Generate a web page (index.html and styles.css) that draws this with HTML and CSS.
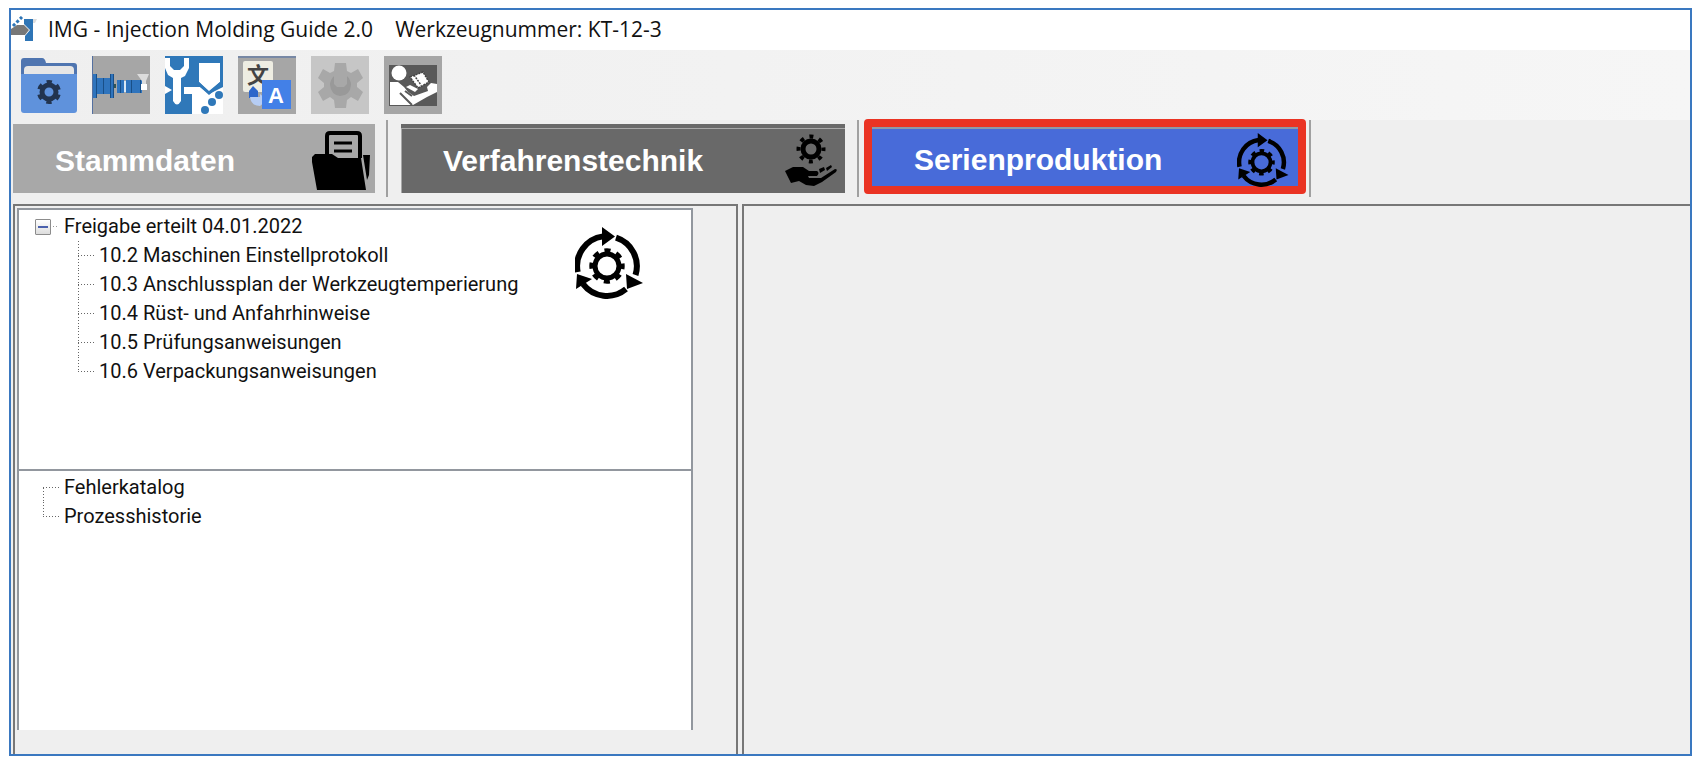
FILE: index.html
```html
<!DOCTYPE html>
<html lang="de">
<head>
  <meta charset="UTF-8">
  <meta name="viewport" content="width=device-width, initial-scale=1.0">
  <title>IMG - Injection Molding Guide 2.0</title>
  <link rel="stylesheet" href="styles.css">
</head>
<body>
  <!-- shared icon: gear inside three cycle arrows -->
  <svg class="defs" width="0" height="0" aria-hidden="true">
    <symbol id="cycle" viewBox="0 0 68 72">
      <g fill="none" stroke="#000" stroke-width="6">
        <path d="M2.7 45A30 30 0 0 1 28 9.4"/>
        <path d="M41 10.6A30 30 0 0 1 60.5 48"/>
        <path d="M51 62A30 30 0 0 1 8 57"/>
        <circle cx="32" cy="39" r="12" stroke-width="5"/>
        <circle cx="32" cy="39" r="15.200" stroke-width="5" stroke-dasharray="6 5.94" stroke-dashoffset="3"/>
      </g>
      <path d="M27 0L40 9.5 27 19zM51 47L68 56 52 62zM2 47L17 52 1 62z"/>
    </symbol>
  </svg>

  <div class="window">
    <header class="titlebar">
      <svg class="app-icon" width="26" height="26" viewBox="0 0 26 26">
        <path fill="#2e75b6" d="M13 3h9v22h-8v-5l5-6-6-6z"/>
        <path fill="#777" d="M0 13l6-4h7l5 5-4 5H0z"/>
        <path fill="none" stroke="#2e75b6" stroke-width="3" stroke-dasharray="3 2" d="M2 10L11 1"/>
        <path fill="#ddd" d="M22 3h4l-2 4h-2z"/>
      </svg>
      <span>IMG - Injection Molding Guide 2.0</span>
      <span>Werkzeugnummer: KT-12-3</span>
    </header>

    <div class="toolbar">
      <button class="tool" aria-label="Projektordner">
        <svg viewBox="0 0 58 58">
          <path fill="#4f75b0" d="M2 5q0-3 3-3h18q3 0 4 5h28q3 0 3 3v20H2z"/>
          <path fill="#e6e6e6" d="M5 18V14q0-4 4-4h42q4 0 4 4v4z"/>
          <path fill="#5f92dc" d="M2 18h56v36q0 3-3 3H5q-3 0-3-3z"/>
          <circle cx="30" cy="36" r="7" fill="none" stroke="#22344f" stroke-width="5"/>
          <circle cx="30" cy="36" r="10" fill="none" stroke="#22344f" stroke-width="4" stroke-dasharray="5.2 5.27" stroke-dashoffset="-2.6"/>
        </svg>
      </button>
      <button class="tool" aria-label="Maschine">
        <svg viewBox="0 0 58 58">
          <path fill="#a6a6a6" d="M0 0h58v58H0z"/>
          <path fill="#5470a0" d="M0 0h1v58H0z"/>
          <path fill="#2f74bd" d="M1 18h4v4h13v-4h4v24h-4v-4H5v4H1zM25 24h7v13h-7zM34 24h16v13H34z"/>
          <path fill="none" stroke="#194f87" d="M4.500 18v24M11.500 22v16M18.500 18v24M21.500 18v24M28.500 24v13M39.500 24v13M48.500 24v13"/>
          <path fill="#355" d="M22 28h2v4h-2z"/>
          <path fill="#fff" d="M49 28h6v6h-6z"/>
          <path fill="#dcdcdc" d="M45 18h12l-3 7v3h-4v-3z"/>
          <path fill="#d9e8f5" d="M32 25h2v11h-2z"/>
        </svg>
      </button>
      <button class="tool" aria-label="Einrichten">
        <svg viewBox="0 0 58 58">
          <path fill="#2f78b9" d="M0 0h58v58H0z"/>
          <path fill="#fff" d="M19 31h16l9 7 14-7v27H27V38h-8zM0 30l7 4-7 4z"/>
          <path fill="#fff" d="M34 7h21v19L44 36 34 26z"/>
          <path fill="#2f78b9" d="M34 26l10 9 11-9v4l-11 9-10-9z"/>
          <path fill="#fff" d="M0 2h5v8l4 4h6l4-4V2h5v10l-4 8-4 2v23q-4 7-8 0V22l-5-3-3-7z"/>
          <g fill="#2f78b9">
            <circle cx="54" cy="39" r="4"/><circle cx="47" cy="46" r="4"/><circle cx="40" cy="54" r="4"/>
          </g>
        </svg>
      </button>
      <button class="tool" aria-label="Sprache">
        <svg viewBox="0 0 58 58">
          <path fill="#a6a6a6" d="M0 0h58v58H0z"/>
          <path fill="#7788a5" d="M0 0h58v2H0z"/>
          <rect x="5" y="5" width="30" height="31" rx="2" fill="#eeede2"/>
          <text x="9" y="27" class="glyph-cjk">文</text>
          <path fill="#2d66ca" d="M15 30l5 5v7h-9v-7z"/>
          <path fill="#b6cdf4" d="M12 41h10v-3l7 6-7 6q-9 0-10-9z"/>
          <rect x="24" y="24" width="29" height="29" fill="#4380e7"/>
          <text x="30" y="47" class="glyph-latin">A</text>
        </svg>
      </button>
      <button class="tool" aria-label="Einstellungen" disabled>
        <svg viewBox="0 0 58 58">
          <path fill="#c6c6c6" d="M0 0h58v58H0z"/>
          <path fill="#a8a8a8" d="M24 7h11l1 8 4 2 7-4 5 9-6 5v4l6 5-5 9-7-4-4 3-1 8H24l-1-8-4-3-7 4-5-9 6-5v-4l-6-5 5-9 7 4 4-2z"/>
          <path fill="#999" d="M23 20q-4 4-4 9 1 10 10 11 10 0 11-11 0-5-4-9v8l-3 3h-7l-3-3z"/>
        </svg>
      </button>
      <button class="tool" aria-label="Anleitung">
        <svg viewBox="0 0 58 58">
          <path fill="#a6a6a6" d="M0 0h58v58H0z"/>
          <path fill="#595959" d="M5 9h48v41H5z"/>
          <g fill="#fff">
            <circle cx="15" cy="17" r="7.500"/>
            <path d="M6 26h8l6 5 4 5 6 4 14-5-1-4 4-4 6 1v8l-10 5-14 8H6z"/>
            <path d="M22 31l4-2 8 4-3 3z"/>
            <path d="M26 21l13-5 6 10-11 6z"/>
          </g>
          <path fill="none" stroke="#595959" stroke-width="2" d="M16 37l12 12M28 40l-7-5"/>
          <path fill="none" stroke="#444" stroke-width="1.500" stroke-dasharray="2 1" d="M26 21l13-5 6 10-11 6zM30 19l7 10"/>
        </svg>
      </button>
    </div>

    <nav class="tabs">
      <button class="tab tab-master">
        <span>Stammdaten</span>
        <svg class="tab-icon folder" viewBox="0 0 58 60">
          <path fill="none" stroke="#000" stroke-width="4" d="M15 24V5q0-3 3-3h27q3 0 3 3v22"/>
          <path fill="none" stroke="#000" stroke-width="3" d="M22 12h18M22 20h18"/>
          <path d="M3 23h17l6 4h23l5 32H5L0 31V26zM51 24h7l-1 20-2 5z"/>
        </svg>
      </button>
      <button class="tab tab-process">
        <span>Verfahrenstechnik</span>
        <svg class="tab-icon" viewBox="0 0 52 54">
          <circle cx="26" cy="15" r="8" fill="none" stroke="#000" stroke-width="5"/>
          <circle cx="26" cy="15" r="12.500" fill="none" stroke="#000" stroke-width="4" stroke-dasharray="4 5.82" stroke-dashoffset="2"/>
          <path d="M0 37l8-4h10l6 4h8q3 2 0 5h-9l1 2h12l14-9q3 0 1 3L37 48l-8 4-8-1-7-4-8 2z"/>
          <path d="M34 35l5-2 1 3-5 3zM41 34l5-3 1 2-5 4z"/>
        </svg>
      </button>
      <button class="tab tab-series">
        <span>Serienproduktion</span>
        <svg class="tab-icon"><use href="#cycle"/></svg>
      </button>
    </nav>

    <main class="panels">
      <section class="panel panel-left">
        <div class="tree-box">
          <div class="tree-root">
            <button class="expander" aria-label="Zuklappen"></button>
            <span>Freigabe erteilt 04.01.2022</span>
          </div>
          <ul class="tree tree-children">
            <li>10.2 Maschinen Einstellprotokoll</li>
            <li>10.3 Anschlussplan der Werkzeugtemperierung</li>
            <li>10.4 Rüst- und Anfahrhinweise</li>
            <li>10.5 Prüfungsanweisungen</li>
            <li>10.6 Verpackungsanweisungen</li>
          </ul>
          <svg class="tree-icon"><use href="#cycle"/></svg>
        </div>
        <div class="tree-box">
          <ul class="tree tree-top">
            <li>Fehlerkatalog</li>
            <li>Prozesshistorie</li>
          </ul>
        </div>
      </section>
      <section class="panel panel-right"></section>
    </main>
  </div>
</body>
</html>
```
FILE: styles.css
```css
* {
  box-sizing: border-box;
}

body {
  margin: 0;
  padding: 8px 8px 6px 9px;
  height: 100vh;
  background: #fff;
  color: #111;
  font-family: "Liberation Sans", Arial, sans-serif;
}

.defs {
  position: absolute;
}

button {
  border: none;
  padding: 0;
  font-family: inherit;
}

.window {
  display: flex;
  flex-direction: column;
  height: 100%;
  border: 2px solid #3a78c0;
  background: #efefef;
}

/* title bar */
.titlebar {
  display: flex;
  align-items: center;
  gap: 22px;
  height: 40px;
  padding-bottom: 2px;
  background: #fff;
  font-family: "Open Sans", "Noto Sans", sans-serif;
  font-size: 21px;
}

.app-icon {
  margin-right: -11px;
}

/* toolbar */
.toolbar {
  display: flex;
  gap: 15px;
  height: 70px;
  padding: 6px 8px;
  background: linear-gradient(to right, #efefef, #f6f6f6);
}

.tool {
  width: 58px;
  height: 58px;
  background: none;
}

.tool svg {
  display: block;
  width: 100%;
  height: 100%;
}

.glyph-cjk {
  font: bold 22px "Noto Sans CJK SC", sans-serif;
  fill: #444;
}

.glyph-latin {
  font: bold 22px "Liberation Sans", sans-serif;
  fill: #fff;
}

/* main tabs */
.tabs {
  display: flex;
  align-items: flex-start;
  height: 84px;
  padding-left: 2px;
  /* thin separator after each tab */
  background:
    linear-gradient(#a0a0a0, #a0a0a0) 375px 0 / 2px 77px no-repeat,
    linear-gradient(#a0a0a0, #a0a0a0) 846px 0 / 2px 77px no-repeat,
    linear-gradient(#a0a0a0, #a0a0a0) 1298px 0 / 2px 77px no-repeat;
}

.tab {
  display: flex;
  justify-content: space-between;
  align-items: center;
  height: 69px;
  margin-top: 4px;
  color: #fff;
  font-size: 30px;
  font-weight: bold;
}

.tab-icon {
  width: 52px;
  height: 54px;
}

.folder {
  width: 58px;
  height: 60px;
}

.tab-master {
  width: 362px;
  margin-right: 26px;
  padding: 4px 5px 0 42px;
  background: #a8a8a8;
}

.tab-process {
  width: 444px;
  margin-right: 19px;
  padding: 0 8px 0 42px;
  border-top: 4px solid #696969;
  background: #696969;
  box-shadow: inset 0 1px #a8a8a8, inset 1px 0 #a8a8a8;
}

.tab-series {
  width: 442px;
  height: 75px;
  margin-top: -1px;
  padding: 6px 9px 0 42px;
  border: 8px solid #ea3323;
  border-radius: 4px;
  background: #486bd9;
  box-shadow: inset 0 2px #8f9aa8;
}

/* panels */
.panels {
  display: flex;
  flex: 1;
  gap: 4px;
  padding-left: 2px;
}

.panel {
  border: 2px solid #777;
  border-bottom: none;
}

.panel-left {
  width: 725px;
  padding: 2px 43px 24px 2px;
  display: flex;
  flex-direction: column;
}

.panel-right {
  flex: 1;
  border-right: none;
}

.tree-box {
  position: relative;
  flex: 1;
  border: 2px solid #92979e;
  border-bottom: none;
  background: #fff;
  padding-top: 2px;
  font-family: Roboto, "Liberation Sans", sans-serif;
  font-size: 20px;
  line-height: 29px;
}

.tree-root {
  display: flex;
  align-items: center;
  padding-left: 16px;
}

.tree-root span {
  padding-left: 13px;
  background: repeating-linear-gradient(to right, #999 0 1px, transparent 1px 3px) 2px 50% / 6px 1px no-repeat;
}

.expander {
  width: 16px;
  height: 16px;
  border: 1px solid #8c8c8c;
  border-radius: 1px;
  background:
    linear-gradient(#4b61ad, #4b61ad) center / 10px 2px no-repeat,
    linear-gradient(#fff, #ddd);
}

.tree {
  margin: 0;
  padding: 0;
  list-style: none;
}

.tree li {
  padding-left: 21px;
  background:
    repeating-linear-gradient(to right, #666 0 1px, transparent 1px 3px) 0 50% / 16px 1px no-repeat,
    repeating-linear-gradient(#666 0 1px, transparent 1px 3px) 0 0 / 1px 100% no-repeat;
}

.tree li:last-child {
  background-size: 16px 1px, 1px 50%;
}

.tree-children {
  margin-left: 59px;
}

.tree-top {
  margin-left: 24px;
}

.tree-top li:first-child {
  background-position: 0 50%, 0 100%;
  background-size: 16px 1px, 1px 50%;
}

/* icon floats over the tree */
.tree-icon {
  position: absolute;
  top: 17px;
  right: 48px;
  width: 68px;
  height: 72px;
}
```
